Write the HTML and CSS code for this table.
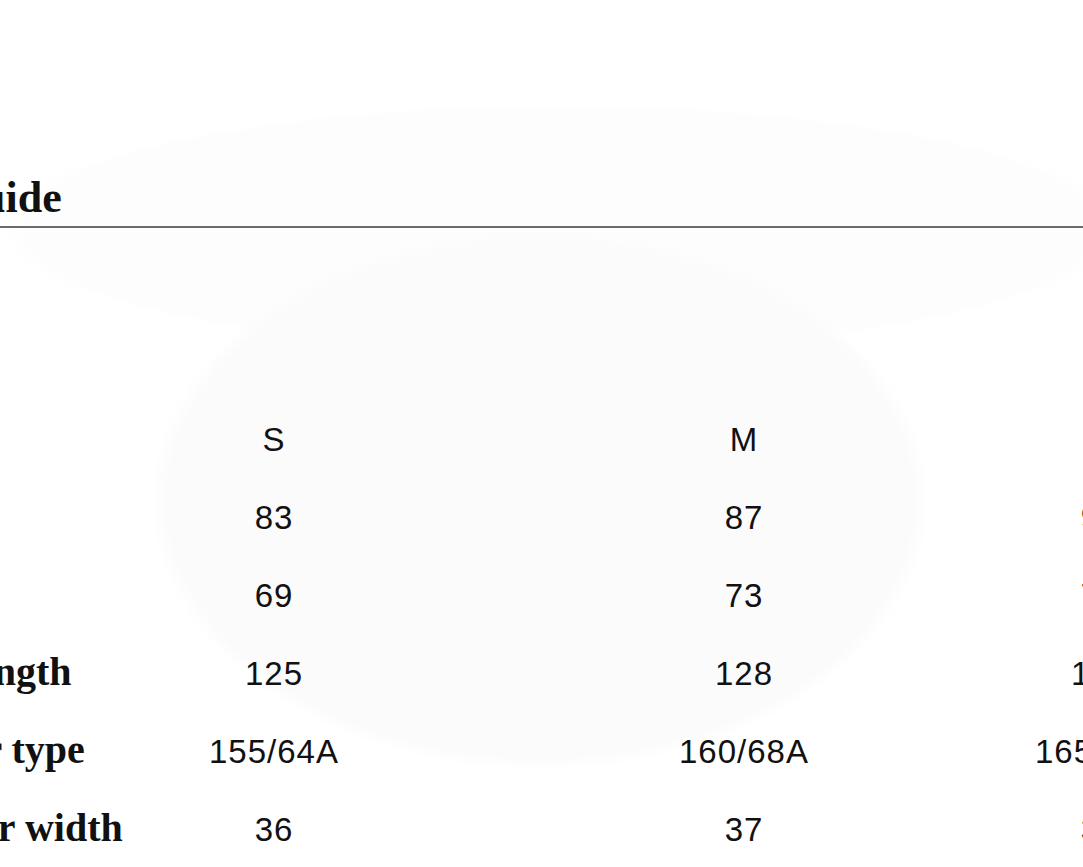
FILE: index.html
```html
<!DOCTYPE html>
<html lang="en">
<head>
<meta charset="utf-8">
<title>Size Guide</title>
<link rel="stylesheet" href="styles.css">
</head>
<body>
<main class="guide">
  <h1 class="guide-title">Size Guide</h1>
  <div class="size-table">
    <div class="size-row">
      <span class="size-label">Size</span>
      <span class="size-cell">S</span>
      <span class="size-cell">M</span>
      <span class="size-cell">L</span>
    </div>
    <div class="size-row">
      <span class="size-label">Bust</span>
      <span class="size-cell">83</span>
      <span class="size-cell">87</span>
      <span class="size-cell">91</span>
    </div>
    <div class="size-row">
      <span class="size-label">Waist</span>
      <span class="size-cell">69</span>
      <span class="size-cell">73</span>
      <span class="size-cell">77</span>
    </div>
    <div class="size-row">
      <span class="size-label">Dress length</span>
      <span class="size-cell">125</span>
      <span class="size-cell">128</span>
      <span class="size-cell">131</span>
    </div>
    <div class="size-row">
      <span class="size-label">Number type</span>
      <span class="size-cell">155/64A</span>
      <span class="size-cell">160/68A</span>
      <span class="size-cell">165/72A</span>
    </div>
    <div class="size-row">
      <span class="size-label">Shoulder width</span>
      <span class="size-cell">36</span>
      <span class="size-cell">37</span>
      <span class="size-cell">38</span>
    </div>
  </div>
</main>
</body>
</html>
```

FILE: styles.css
```css
html, body {
  margin: 0;
  padding: 0;
  overflow: hidden;
}

body {
  width: 1083px;
  height: 867px;
  color: #111;
  background:
    radial-gradient(ellipse 390px 270px at 540px 500px, #fbfbfb 0, #fbfbfb 95%, rgba(255,255,255,0) 100%),
    radial-gradient(ellipse 560px 125px at 560px 228px, #fdfdfd 0, #fdfdfd 95%, rgba(255,255,255,0) 100%),
    #ffffff;
}

.guide {
  margin-left: -140px;
  width: 1400px;
  padding-top: 174px;
}

.guide-title {
  margin: 0;
  padding-bottom: 4px;
  font-family: "Liberation Serif", "Times New Roman", serif;
  font-weight: 700;
  font-size: 44px;
  line-height: 48px;
  border-bottom: 2px solid #6b6b6b;
}

.size-table {
  margin-top: 171px;
  display: flex;
  flex-direction: column;
}

.size-row {
  display: grid;
  grid-template-columns: 220px 388px 552px 160px;
  height: 78px;
  align-items: baseline;
}

.size-label {
  font-family: "Liberation Serif", "Times New Roman", serif;
  font-weight: 700;
  font-size: 40px;
  line-height: 78px;
  white-space: nowrap;
}

.size-cell {
  font-family: "Liberation Sans", Arial, sans-serif;
  font-size: 33px;
  letter-spacing: 1px;
  line-height: 78px;
  text-align: center;
  white-space: nowrap;
}
```
